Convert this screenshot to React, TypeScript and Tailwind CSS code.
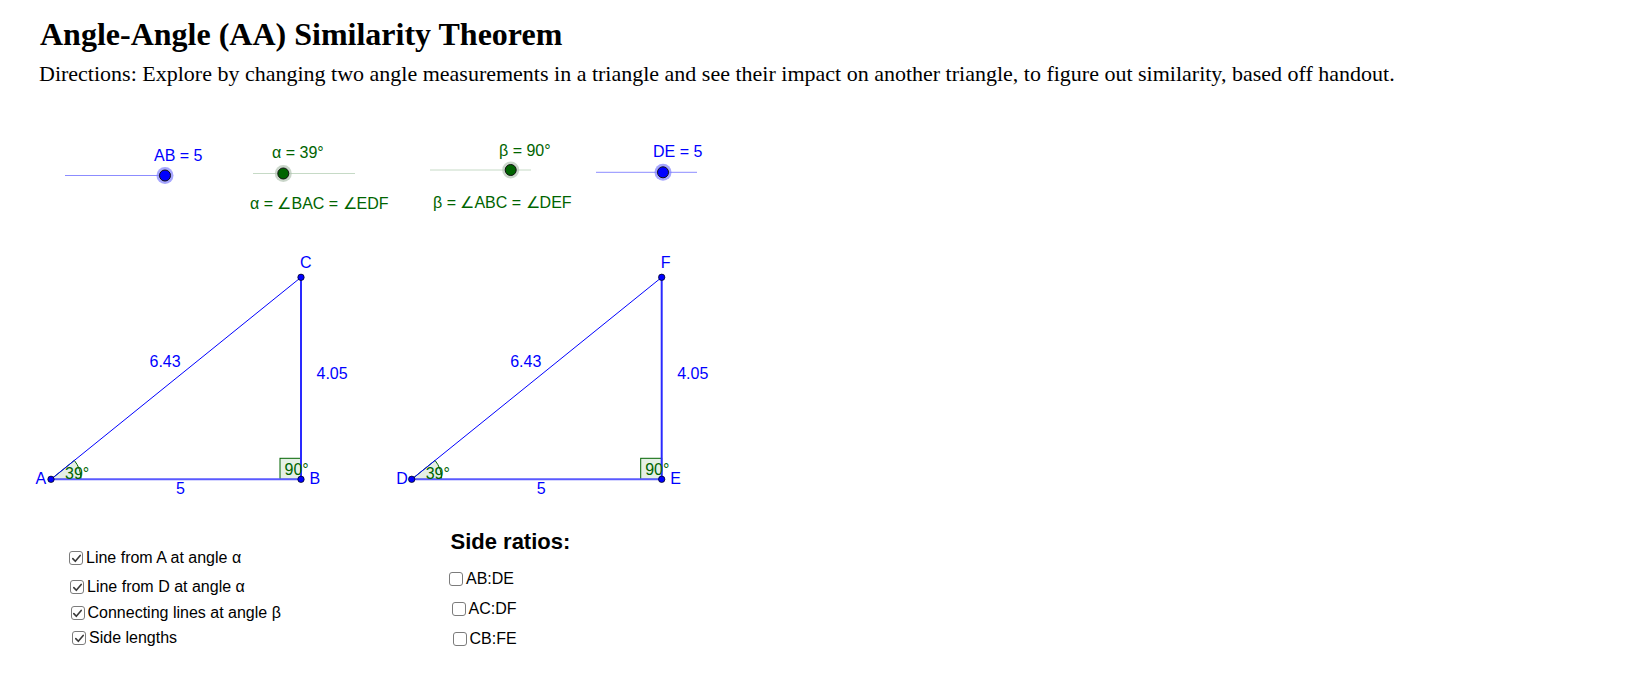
import React from 'react';

const BLUE = '#0000ff';
const GREEN = '#006400';

const deg = (d: number) => (d * Math.PI) / 180;

// one slider as GeoGebra draws it
const Slider = ({ x1, x2, y, px, label, lx, ly, kind }: {
  x1: number; x2: number; y: number; px: number; label: string; lx: number; ly: number; kind: 'blue' | 'green';
}) => {
  const line = kind === 'blue' ? '#8c8cff' : '#c6dac6';
  const halo = kind === 'blue' ? '#8080ff' : '#b4c4b4';
  const fill = kind === 'blue' ? BLUE : GREEN;
  return (
    <g>
      <line x1={x1} y1={y} x2={x2} y2={y} stroke={line} strokeWidth={1} />
      <circle cx={px} cy={y} r={8.5} fill={halo} opacity={0.7} />
      <circle cx={px} cy={y} r={5.5} fill={fill} stroke="#111" strokeWidth={1} />
      <text x={lx} y={ly} fill={fill} fontSize={16}>{label}</text>
    </g>
  );
};

const Triangle = ({ dx, p, q, r }: { dx: number; p: string; q: string; r: string }) => {
  const ax = 51, ay = 479.3, bx = 301, cy = 277.3;
  const rad = 30;
  const ex = ax + rad * Math.cos(deg(39));
  const ey = ay - rad * Math.sin(deg(39));
  return (
    <g transform={`translate(${dx} 0)`}>
      <path d={`M${ax} ${ay} L${ax + rad} ${ay} A${rad} ${rad} 0 0 0 ${ex} ${ey} Z`} fill={GREEN} fillOpacity={0.1} stroke={GREEN} strokeWidth={1} />
      <rect x={280} y={458.3} width={21} height={21} fill={GREEN} fillOpacity={0.1} stroke={GREEN} strokeWidth={1} />
      <line x1={ax} y1={ay} x2={bx} y2={ay} stroke="#5a5aff" strokeWidth={2} />
      <line x1={bx} y1={ay} x2={bx} y2={cy} stroke="#2a2aff" strokeWidth={2} />
      <line x1={ax} y1={ay} x2={bx} y2={cy} stroke={BLUE} strokeWidth={1} />
      <text x={65} y={479} fill={GREEN} fontSize={16}>39°</text>
      <text x={284.5} y={474.5} fill={GREEN} fontSize={16}>90°</text>
      {[[ax, ay], [bx, ay], [bx, cy]].map(([x, y], i) => (
        <circle key={i} cx={x} cy={y} r={3.2} fill={BLUE} stroke="#000" strokeWidth={0.7} />
      ))}
      <text x={35.5} y={484} fill={BLUE} fontSize={16}>{p}</text>
      <text x={309.5} y={484} fill={BLUE} fontSize={16}>{q}</text>
      <text x={300} y={268} fill={BLUE} fontSize={16}>{r}</text>
      <text x={149.5} y={366.5} fill={BLUE} fontSize={16}>6.43</text>
      <text x={316.5} y={378.5} fill={BLUE} fontSize={16}>4.05</text>
      <text x={176} y={494} fill={BLUE} fontSize={16}>5</text>
    </g>
  );
};

const Box = ({ checked }: { checked: boolean }) => (
  <span className="w-[14px] h-[14px] shrink-0 rounded-[3px] border-[1.5px] border-[#7c7c7c] bg-white flex items-center justify-center">
    {checked && (
      <svg width="11" height="11" viewBox="0 0 11 11">
        <path d="M1.8 5.6 L4.3 8.3 L9.2 2.4" fill="none" stroke="#3a3a3a" strokeWidth={1.6} strokeLinecap="round" strokeLinejoin="round" />
      </svg>
    )}
  </span>
);

const Check = ({ label, checked, className }: { label: string; checked: boolean; className: string }) => (
  <div className={`flex items-center h-[20px] gap-[3px] ${className}`}>
    <Box checked={checked} />
    <span className="text-[16px] leading-[20px] text-black">{label}</span>
  </div>
);

export default function App() {
  return (
    <div className="w-[1646px] h-[686px] bg-white overflow-hidden">
      <div className="h-[130px] pt-[16px]">
        <h1 className="pl-[40px] text-[32px] leading-[36px] font-bold text-black font-['Liberation_Serif',serif]">
          Angle-Angle (AA) Similarity Theorem
        </h1>
        <p className="mt-[9px] pl-[39px] text-[22px] leading-[26px] text-black font-['Liberation_Serif',serif]">
          Directions: Explore by changing two angle measurements in a triangle and see their impact on another triangle, to figure out similarity, based off handout.
        </p>
      </div>

      <div className="font-['Liberation_Sans',Arial,sans-serif]">
        <svg width="720" height="370" viewBox="0 130 720 370" className="block" fontFamily="'Liberation Sans', Arial, sans-serif">
          <Slider x1={65} x2={165} y={175.5} px={165} label="AB = 5" lx={154} ly={161} kind="blue" />
          <Slider x1={253} x2={355} y={173.5} px={283.3} label="α = 39°" lx={272} ly={157.5} kind="green" />
          <text x={250} y={208.5} fill={GREEN} fontSize={16}>α = ∠BAC = ∠EDF</text>
          <Slider x1={430} x2={531} y={170} px={510.7} label="β = 90°" lx={499} ly={155.5} kind="green" />
          <text x={433} y={207.5} fill={GREEN} fontSize={16}>β = ∠ABC = ∠DEF</text>
          <Slider x1={596} x2={697} y={172.3} px={663} label="DE = 5" lx={653} ly={157} kind="blue" />
          <Triangle dx={0} p="A" q="B" r="C" />
          <Triangle dx={360.7} p="D" q="E" r="F" />
        </svg>

        <div className="flex">
          <div className="w-[449px] pt-[48px] pl-[69px]">
            <Check label="Line from A at angle α" checked className="" />
            <Check label="Line from D at angle α" checked className="mt-[9px] ml-[1px]" />
            <Check label="Connecting lines at angle β" checked className="mt-[6px] ml-[1.5px]" />
            <Check label="Side lengths" checked className="mt-[5px] ml-[3px]" />
          </div>
          <div className="pt-[29px]">
            <div className="ml-[1.5px] text-[22px] leading-[26px] font-bold text-black">Side ratios:</div>
            <Check label="AB:DE" checked={false} className="mt-[14px]" />
            <Check label="AC:DF" checked={false} className="mt-[10px] ml-[2.5px]" />
            <Check label="CB:FE" checked={false} className="mt-[10px] ml-[3.5px]" />
          </div>
        </div>
      </div>
    </div>
  );
}
